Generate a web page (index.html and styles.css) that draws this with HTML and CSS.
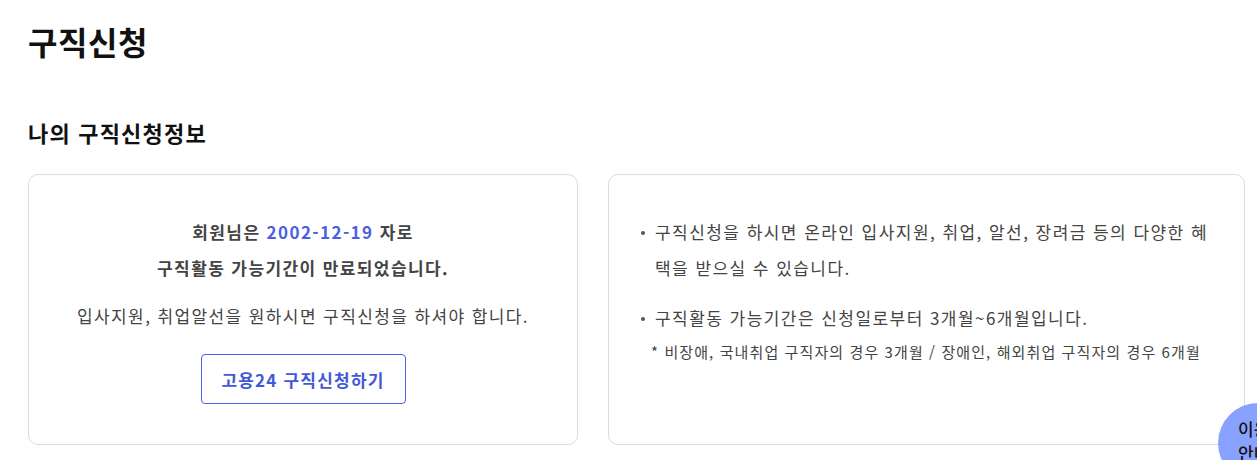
FILE: index.html
```html
<!DOCTYPE html>
<html lang="ko">
<head>
<meta charset="utf-8">
<title>구직신청</title>
<link rel="stylesheet" href="styles.css">
</head>
<body>
<main class="page">
  <h1 class="title">구직신청</h1>
  <h2 class="subtitle">나의 구직신청정보</h2>
  <div class="cards">
    <section class="card card-status">
      <p class="status">회원님은 <span class="date">2002-12-19</span> 자로<br>구직활동 가능기간이 만료되었습니다.</p>
      <p class="desc">입사지원, 취업알선을 원하시면 구직신청을 하셔야 합니다.</p>
      <a class="btn" href="#">고용24 구직신청하기</a>
    </section>
    <section class="card card-info">
      <ul class="info-list">
        <li>구직신청을 하시면 온라인 입사지원, 취업, 알선, 장려금 등의 다양한 혜택을 받으실 수 있습니다.</li>
        <li>구직활동 가능기간은 신청일로부터 3개월~6개월입니다.
          <p class="note">* 비장애, 국내취업 구직자의 경우 3개월 / 장애인, 해외취업 구직자의 경우 6개월</p>
        </li>
      </ul>
    </section>
  </div>
</main>
<a class="float-guide" href="#">이용<br>안내</a>
</body>
</html>
```

FILE: styles.css
```css
* { box-sizing: border-box; }
html, body { margin: 0; padding: 0; }
body {
  font-family: "Noto Sans CJK KR", "Noto Sans", sans-serif;
  color: #222;
  background: #fff;
  overflow: hidden;
}
.page { padding: 18px 0 0 28px; }
.title {
  margin: 0;
  font-size: 32px;
  font-weight: 700;
  line-height: 46px;
  color: #111;
  letter-spacing: 0.6px;
}
.subtitle {
  margin: 52px 0 0;
  font-size: 22px;
  font-weight: 700;
  line-height: 32px;
  color: #111;
  letter-spacing: 1.2px;
}
.cards {
  display: grid;
  grid-template-columns: 550px 637px;
  gap: 30px;
  margin-top: 26px;
}
.card {
  border: 1px solid #dcdcdc;
  border-radius: 10px;
  height: 271px;
}
.card-status {
  display: flex;
  flex-direction: column;
  align-items: center;
  padding-top: 39px;
  text-align: center;
}
.status {
  margin: 0;
  font-size: 17px;
  font-weight: 700;
  line-height: 36px;
  color: #444;
  letter-spacing: 1.4px;
}
.date { color: #4c5fe3; }
.desc {
  margin: 17px 0 0;
  font-size: 17px;
  line-height: 26px;
  color: #444;
  letter-spacing: 1.4px;
}
.btn {
  margin-top: 25px;
  width: 205px;
  height: 50px;
  display: flex;
  align-items: center;
  justify-content: center;
  border: 1px solid #4c62e6;
  border-radius: 4px;
  color: #4358d8;
  font-size: 17px;
  font-weight: 700;
  letter-spacing: 1.2px;
  text-decoration: none;
}
.card-info { padding: 39px 28px 0 30px; }
.info-list {
  margin: 0;
  padding: 0 0 0 16px;
  list-style: none;
}
.info-list li {
  position: relative;
  font-size: 17px;
  line-height: 36px;
  color: #444;
  margin-bottom: 14px;
  letter-spacing: 1.45px;
}
.info-list li::before {
  content: "";
  position: absolute;
  left: -14px;
  top: 17px;
  width: 4px;
  height: 4px;
  border-radius: 50%;
  background: #555;
}
.note {
  margin: 4px 0 0 -4px;
  font-size: 15px;
  line-height: 24px;
  color: #444;
  letter-spacing: 1.1px;
}
.float-guide {
  position: fixed;
  left: 1218px;
  top: 403px;
  width: 80px;
  height: 80px;
  border-radius: 50%;
  background: #8aa2ff;
  color: #111;
  text-decoration: none;
  font-size: 17px;
  font-weight: 500;
  line-height: 24px;
  padding: 14px 0 0 20px;
}
```
